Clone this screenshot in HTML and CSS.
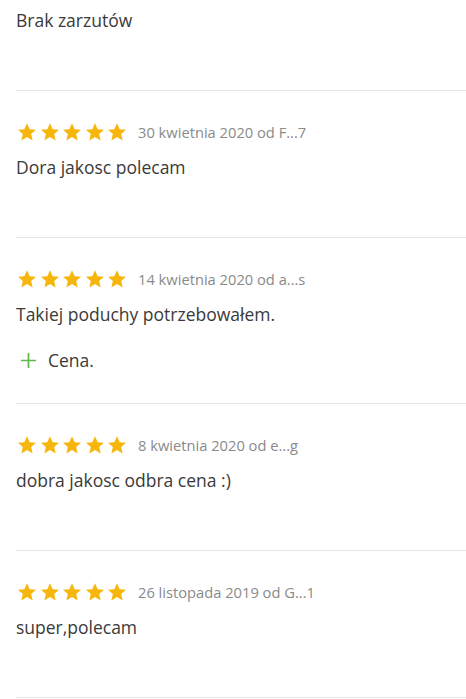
FILE: index.html
```html
<!DOCTYPE html>
<html>

	<head>
		<meta charset="UTF-8">
		<title>Opinie</title>
		<link rel="stylesheet" href="styles.css">
	</head>

	<body>
		<svg width="0" height="0" class="defs">
			<symbol id="star" viewBox="0 0 24 24">
				<path d="M12 1.6l3.2 7.1 7.6.7-5.8 5.1 1.8 7.6L12 18.1l-6.8 4 1.8-7.6-5.8-5.1 7.6-.7z"/>
			</symbol>
		</svg>

		<ul class="reviews">
			<li class="review first">
				<div class="body">
					<p class="text">Brak zarzutów</p>
				</div>
			</li>
			<li class="review">
				<div class="meta">
					<span class="stars">
						<svg><use href="#star"/></svg><svg><use href="#star"/></svg><svg><use href="#star"/></svg><svg><use href="#star"/></svg><svg><use href="#star"/></svg>
					</span>
					<span class="date">30 kwietnia 2020 od F...7</span>
				</div>
				<div class="body">
					<p class="text">Dora jakosc polecam</p>
				</div>
			</li>
			<li class="review">
				<div class="meta">
					<span class="stars">
						<svg><use href="#star"/></svg><svg><use href="#star"/></svg><svg><use href="#star"/></svg><svg><use href="#star"/></svg><svg><use href="#star"/></svg>
					</span>
					<span class="date">14 kwietnia 2020 od a...s</span>
				</div>
				<div class="body">
					<p class="text">Takiej poduchy potrzebowałem.</p>
					<p class="pros">
						<svg class="plus" viewBox="0 0 16 16"><path d="M8 1v14M1 8h14"/></svg>
						Cena.
					</p>
				</div>
			</li>
			<li class="review">
				<div class="meta">
					<span class="stars">
						<svg><use href="#star"/></svg><svg><use href="#star"/></svg><svg><use href="#star"/></svg><svg><use href="#star"/></svg><svg><use href="#star"/></svg>
					</span>
					<span class="date">8 kwietnia 2020 od e...g</span>
				</div>
				<div class="body">
					<p class="text">dobra jakosc odbra cena :)</p>
				</div>
			</li>
			<li class="review">
				<div class="meta">
					<span class="stars">
						<svg><use href="#star"/></svg><svg><use href="#star"/></svg><svg><use href="#star"/></svg><svg><use href="#star"/></svg><svg><use href="#star"/></svg>
					</span>
					<span class="date">26 listopada 2019 od G...1</span>
				</div>
				<div class="body">
					<p class="text">super,polecam</p>
				</div>
			</li>
		</ul>
	</body>

</html>
```

FILE: styles.css
```css
* {
	margin: 0;
	padding: 0;
}

body {
	background-color: #fff;
	font-family: "Open Sans", "Liberation Sans", sans-serif;
	color: #3a3a3a;
}

.defs {
	position: absolute;
}

.reviews {
	list-style: none;
	padding-left: 16px;
}

.review {
	padding: 31px 0;
	border-bottom: 1px solid #e4e4e4;
}

.review.first {
	padding-top: 8px;
}

.meta {
	display: flex;
	align-items: center;
	height: 20px;
	margin-bottom: 13px;
}

.stars {
	display: flex;
	gap: 2.5px;
	margin-left: 1px;
}

.stars svg {
	width: 20px;
	height: 20px;
	fill: #f6b60c;
}

.date {
	margin-left: 11px;
	font-size: 14.7px;
	color: #8a8a8a;
}

.body {
	min-height: 51px;
}

.text {
	font-size: 17.5px;
	line-height: 24px;
}

.pros {
	display: flex;
	align-items: center;
	gap: 11px;
	margin-top: 22px;
	font-size: 17.5px;
	line-height: 24px;
}

.plus {
	width: 17px;
	height: 17px;
	margin-left: 4px;
	fill: none;
	stroke: #5db84a;
	stroke-width: 1.6;
}
```
